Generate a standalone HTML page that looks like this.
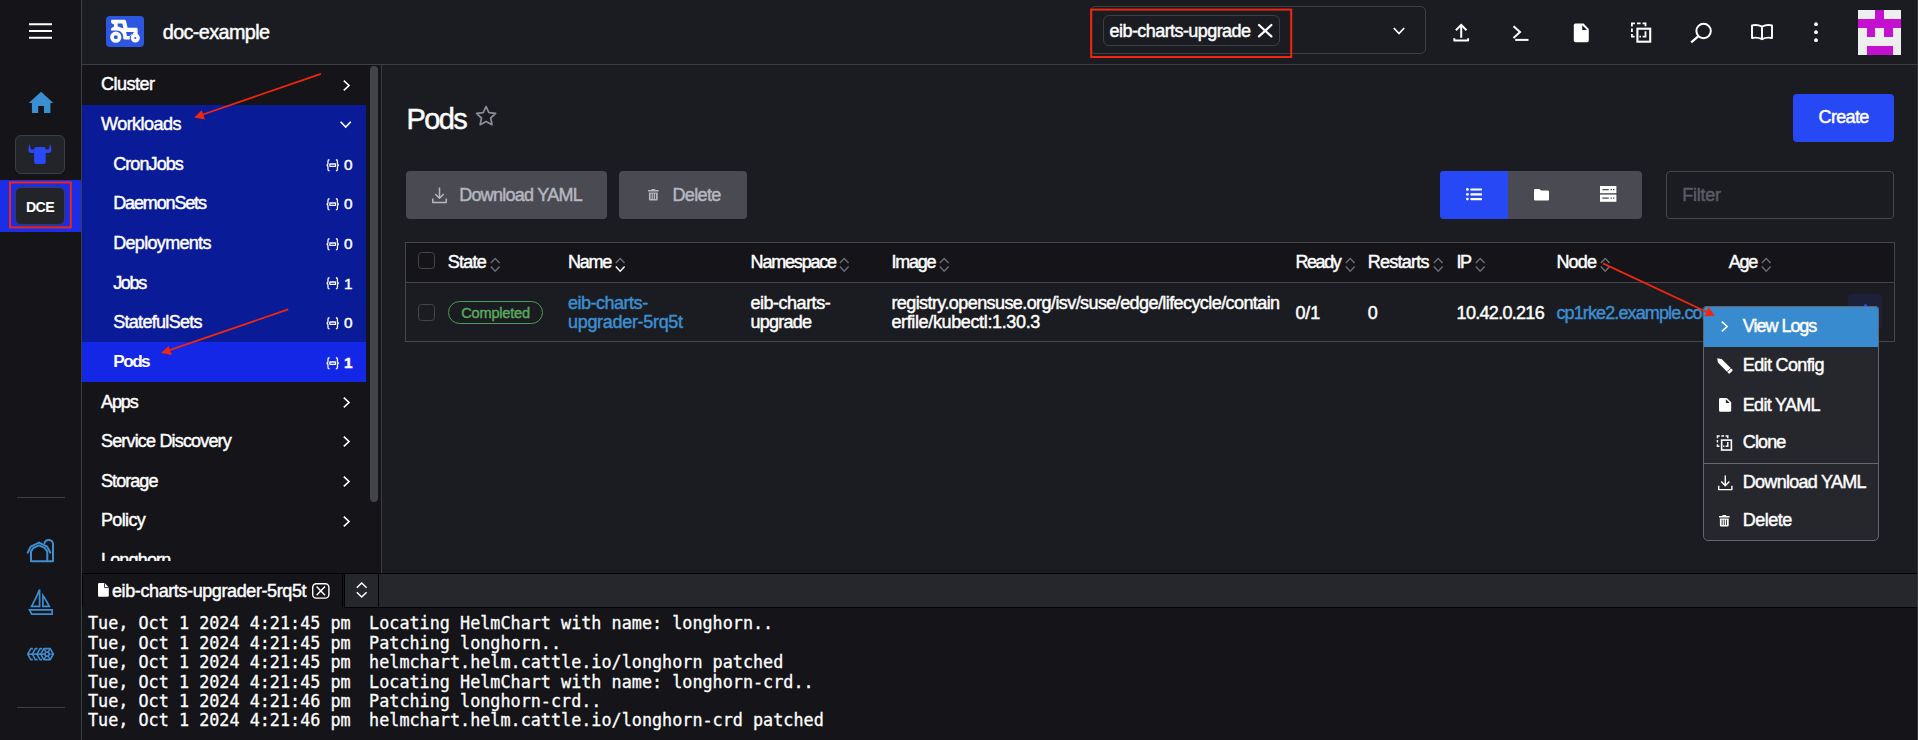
<!DOCTYPE html>
<html lang="en">
<head>
<meta charset="utf-8">
<title>Pods - doc-example</title>
<style>
*{box-sizing:border-box;margin:0;padding:0}
html,body{width:1918px;height:740px;overflow:hidden;background:#1b1c21}
body{position:relative;font-family:"Liberation Sans",sans-serif;font-size:18px;color:#fff;-webkit-font-smoothing:antialiased}
.abs{position:absolute}
.t{position:absolute;white-space:nowrap;line-height:20px;height:20px;-webkit-text-stroke:0.45px currentColor}
svg{position:absolute;overflow:visible}
/* rail */
#rail{left:0;top:0;width:81px;height:740px;background:#141419}
#railb{left:81px;top:0;width:1px;height:740px;background:#3d3e44}
/* header */
#hdr{left:82px;top:0;width:1836px;height:64px;background:#1b1c21}
#hdrb{left:82px;top:64px;width:1836px;height:1px;background:#3d3e44}
/* nav */
#nav{left:82px;top:65px;width:299px;height:508px;background:#141419;overflow:hidden}
#navb{left:381px;top:65px;width:1px;height:508px;background:#3d3e44}
.row{position:absolute;left:0;width:284px;height:39.7px}
.row .t{top:10px}
.cnt{position:absolute;left:262px;top:11.9px;font-size:15.4px;line-height:18px;white-space:nowrap;-webkit-text-stroke:0.45px currentColor}
/* main */
#main{left:382px;top:65px;width:1536px;height:508px;background:#1b1c21}
.btn{position:absolute;border-radius:4px}
.dis{color:#b6b7c0}
.th{top:251.8px}
.lnk{color:#3d8fd1}
.mi{left:1742.8px}
#log span{margin-left:-1.8px}
/* bottom */
#bot{left:82px;top:573px;width:1836px;height:167px;background:#141419}
#log{position:absolute;left:6px;top:41.4px;font-family:"DejaVu Sans Mono","Liberation Mono",monospace;font-size:16.79px;line-height:19.4px;white-space:pre;color:#fff;-webkit-text-stroke:0.3px #fff}
/*LS*/
#tcluster{letter-spacing:-0.61px}
#tns{letter-spacing:-0.57px}
#ttitle{letter-spacing:-1.68px}
#tcreate{letter-spacing:-0.67px}
#tdl{letter-spacing:-0.74px}
#tdel{letter-spacing:-0.64px}
#tfilter{letter-spacing:-0.27px}
#h1{letter-spacing:-0.75px}
#h2{letter-spacing:-1.26px}
#h3{letter-spacing:-1.19px}
#h4{letter-spacing:-1.25px}
#h5{letter-spacing:-1.41px}
#h6{letter-spacing:-0.73px}
#h7{letter-spacing:-1.51px}
#h8{letter-spacing:-0.81px}
#h9{letter-spacing:-1.34px}
#tcomp{letter-spacing:-0.23px}
#c1a{letter-spacing:-0.49px}
#c1b{letter-spacing:-0.31px}
#c2a{letter-spacing:-0.50px}
#c2b{letter-spacing:-0.79px}
#c3a{letter-spacing:-0.58px}
#c3b{letter-spacing:-0.36px}
#c4{letter-spacing:-0.08px}
#c6{letter-spacing:-0.70px}
#mt1{letter-spacing:-1.02px}
#mt2{letter-spacing:-0.64px}
#mt3{letter-spacing:-0.71px}
#mt4{letter-spacing:-0.87px}
#mt5{letter-spacing:-0.72px}
#mt6{letter-spacing:-0.52px}
#ttab{letter-spacing:-0.40px}
#n0{letter-spacing:-0.50px}
#n1{letter-spacing:-0.52px}
#n2{letter-spacing:-0.91px}
#n3{letter-spacing:-1.14px}
#n4{letter-spacing:-0.68px}
#n5{letter-spacing:-1.33px}
#n6{letter-spacing:-0.70px}
#n7{letter-spacing:-1.51px}
#n8{letter-spacing:-1.08px}
#n9{letter-spacing:-0.83px}
#n10{letter-spacing:-0.94px}
#n11{letter-spacing:-0.64px}
#n12{letter-spacing:-0.83px}
#dce{letter-spacing:-0.65px}
#c7{letter-spacing:-0.88px}
/*ENDLS*/
</style>
</head>
<body>
<div id="rail" class="abs">
<svg style="left:28.6px;top:22.8px" width="23" height="16" viewBox="0 0 23 16"><path d="M0 1.2H23M0 7.95H23M0 14.7H23" stroke="#fff" stroke-width="2.1" fill="none"/></svg>
<svg id="ihome" style="left:28px;top:91px" width="26" height="23" viewBox="28 91 26 23"><path d="M41.1 91.8 L53.4 103 H50.4 V113 H44 V105.9 H38.2 V113 H31.9 V103 H28.7 Z" fill="#3a8fd0"/></svg>
<div class="abs" style="left:15px;top:135px;width:50px;height:39px;background:#232429;border:1px solid #3d3e44;border-radius:6px"></div>
<svg id="ibull" style="left:27px;top:143px" width="26" height="22" viewBox="27 143 26 22"><path d="M36.1 146.9 H43.7 Q45.7 146.9 45.7 148.9 V162 Q45.7 164 43.7 164 H36.1 Q34.1 164 34.1 162 V148.9 Q34.1 146.9 36.1 146.9 Z M34.3 149.6 H32.2 Q30.7 149.6 30.5 148 L29.8 143.7 L28.4 148.4 Q27.8 153 31.6 153 H34.3 Z M45.5 149.6 H47.6 Q49.1 149.6 49.3 148 L50 143.7 L51.4 148.4 Q52 153 48.2 153 H45.5 Z" fill="#2b48f7"/></svg>
<div class="abs" style="left:0;top:180px;width:81px;height:52px;background:#1a2ee8"></div>
<div class="abs" style="left:15px;top:187.3px;width:50px;height:38px;background:#232429;border:1px solid #3d3e44;border-radius:6px"></div>
<div class="t" id="dce" style="left:15px;width:50px;top:196.5px;text-align:center;font-weight:bold;font-size:14.2px;-webkit-text-stroke:0">DCE</div>
<div class="abs" style="left:17px;top:497px;width:48px;height:1px;background:#3d3e44"></div>
<div class="abs" style="left:17px;top:707px;width:48px;height:1px;background:#3d3e44"></div>
<svg id="ibarn" style="left:26px;top:538px" width="30" height="26" viewBox="26 538 30 26" fill="none" stroke="#3d8fd1" stroke-width="2" stroke-linejoin="round" stroke-linecap="round"><path d="M27.7 552.6 L30.7 546.6 L39 542.6 L47.2 546.6 L50.3 552.6"/><path d="M31 561 V551.4 L33.4 547.9 L39 545.4 L44.6 547.9 L47.3 551.4 V561"/><path d="M31 561.2 H53 V543.9 A4.35 4.35 0 0 0 44.5 543"/></svg>
<svg id="iboat" style="left:27px;top:587px" width="28" height="30" viewBox="27 587 28 30" fill="none" stroke="#3d8fd1" stroke-width="1.7" stroke-linejoin="miter"><path d="M39.6 589.6 L39.6 606.3 L31.6 606.3 Q36.4 597.5 39.6 589.6 Z"/><path d="M42.9 595.6 Q46.6 601 49.3 606.3 L42.9 606.3 Z"/><path d="M29.5 609.8 H52.1 V614.1 H31.7 Z"/></svg>
<svg id="ifleet" style="left:26px;top:646px" width="30" height="16" viewBox="26 646 30 16" fill="none" stroke="#3d8fd1" stroke-width="1.6" stroke-linejoin="round"><path d="M32.9 648.6 H30.8 L27.7 654.1 L30.8 659.6 H32.9"/><path d="M37.5 648.6 H35.4 L32.3 654.1 L35.4 659.6 H37.5"/><path d="M42.1 648.6 H40.0 L36.9 654.1 L40.0 659.6 H42.1"/><path d="M27.7 654.1 H44.8"/><path d="M43.9 648.6 H50.2 L53.4 654.1 L50.2 659.6 H43.9 L40.7 654.1 Z"/><circle cx="47.05" cy="654.1" r="2.1"/><path d="M43.9 648.6 L46 652.2 M50.2 648.6 L48.1 652.2 M53.4 654.1 H49.2 M50.2 659.6 L48.1 656 M43.9 659.6 L46 656" stroke-width="1.4"/></svg>
</div>
<div id="railb" class="abs"></div>
<div id="hdr" class="abs"></div>
<div class="abs" style="left:106px;top:16px;width:38px;height:31px;background:#2d57e1;border-radius:4px"></div>
<svg id="itractor" style="left:106px;top:16px" width="38" height="31" viewBox="106 16 38 31"><path d="M112 19.8 H124.6 Q125.6 19.8 125.9 20.8 L127.6 27.8 H136.4 Q137.6 27.8 137.6 29 V34 L133 34 Q129.6 34 129.6 39.4 H124.6 Q123.2 39.4 123.2 38 V36 Q122 30.6 116 30.6 H112.2 Q111 30.6 111 29.4 Q111 28.2 112.2 27.6 L114 26.8 V24.6 L112 23.6 Q111 23.2 111 21.6 V20.8 Q111 19.8 112 19.8 Z M117.6 23.6 V26.2 L123.4 28.4 L122.4 23.6 Z M126 32 L127 36 H131 L134 32 Z" fill="#fff" fill-rule="evenodd"/><circle cx="115.8" cy="37.2" r="3.8" fill="none" stroke="#fff" stroke-width="3.6"/><circle cx="135.3" cy="38" r="2.8" fill="none" stroke="#fff" stroke-width="3.4"/></svg>
<div class="t" id="tcluster" style="left:162.8px;top:21.9px;font-size:19.8px">doc-example</div>
<div class="abs" style="left:1090px;top:6px;width:336px;height:48px;border:1px solid #3e3f45;border-radius:5px"></div>
<div class="abs" style="left:1103px;top:15px;width:177px;height:31px;border:1px solid #3e3f45;border-radius:6px"></div>
<div class="t" id="tns" style="left:1109.6px;top:20.6px">eib-charts-upgrade</div>
<svg style="left:1258px;top:24.3px" width="14.4" height="13.4" viewBox="0 0 14.4 13.4"><path d="M1 1 L13.4 12.4 M13.4 1 L1 12.4" stroke="#fff" stroke-width="2.2" fill="none" stroke-linecap="round"/></svg>
<svg style="left:1392.5px;top:27.2px" width="12" height="8" viewBox="0 0 12 8"><path d="M0.8 1 L6 6.6 L11.2 1" stroke="#fff" stroke-width="1.7" fill="none"/></svg>
<!-- header icons -->
<svg id="hi1" style="left:1452px;top:23px" width="18" height="20" viewBox="1452 23 18 20" fill="none" stroke="#fff" stroke-width="2"><path d="M1461.2 37.8 V25 M1455.9 30.2 L1461.2 24.9 L1466.5 30.2"/><path d="M1454.3 38.2 V40.5 H1468.1 V38.2" stroke-linejoin="round"/></svg>
<svg id="hi2" style="left:1512px;top:25px" width="18" height="17" viewBox="1512 25 18 17" fill="none" stroke="#fff" stroke-width="2"><path d="M1513.5 26.3 L1520 32 L1513.5 37.9"/><path d="M1515.2 39.9 H1528.5"/></svg>
<svg id="hi3" style="left:1573px;top:23px" width="17" height="20" viewBox="1573 23 17 20"><path d="M1575.4 23.6 H1583.6 L1588.8 28.9 V40.4 Q1588.8 42.2 1587 42.2 H1575.6 Q1573.8 42.2 1573.8 40.4 V25.2 Q1573.8 23.6 1575.4 23.6 Z" fill="#fff"/><path d="M1582.2 25.2 V29.9 H1587 Z" fill="#1b1c21"/></svg>
<svg id="hi4" style="left:1630px;top:22px" width="23" height="21" viewBox="1630 22 23 21" fill="none" stroke="#fff" stroke-width="1.8"><path d="M1631.9 26.4 V23.4 H1634.9 M1637 23.4 H1640.6 M1642.6 23.4 H1645.5 V26.2 M1631.9 28.4 V32 M1631.9 34 V36.7 H1634.6 M1645.5 31.2 V36.7 H1642.6 M1641 36.7 H1639.4"/><rect x="1637.4" y="28.7" width="12.8" height="13" stroke-width="2.1"/></svg>
<svg id="hi5" style="left:1690px;top:22px" width="23" height="21" viewBox="1690 22 23 21" fill="none" stroke="#fff" stroke-width="2"><circle cx="1703.6" cy="31" r="7.2"/><path d="M1698.2 36.4 L1691.2 42.4" stroke-width="2.2"/></svg>
<svg id="hi6" style="left:1749px;top:23px" width="26" height="18" viewBox="1749 23 26 18" fill="none" stroke="#fff" stroke-width="1.9" stroke-linejoin="round"><path d="M1762 26.6 Q1757.4 24.2 1752 25.4 V38 Q1757.4 36.8 1762 39.2 Q1766.6 36.8 1772 38 V25.4 Q1766.6 24.2 1762 26.6 Z M1762 26.6 V39.2"/></svg>
<svg id="hi7" style="left:1813px;top:22px" width="6" height="20" viewBox="1813 22 6 20" fill="#fff"><circle cx="1816" cy="24.2" r="1.9"/><circle cx="1816" cy="32.2" r="1.9"/><circle cx="1816" cy="40.2" r="1.9"/></svg>
<svg id="avatar" style="left:1858px;top:9.6px" width="43.2" height="44.6" viewBox="0 0 50 50" preserveAspectRatio="none" shape-rendering="crispEdges"><rect width="50" height="50" fill="#eeeeee"/><path d="M20 0H30V10H50V20H40V30H30V20H20V30H10V20H0V10H20Z M10 40H40V50H10Z" fill="#c411d0"/></svg>
<div id="hdrb" class="abs"></div>
<div id="nav" class="abs">
<div class="abs" style="left:0;top:39.9px;width:284px;height:237.2px;background:#0a1b97"></div>
<div class="abs" style="left:0;top:276.9px;width:284px;height:40.2px;background:#1426e6"></div>
<div class="row " style="top:-0.54px"><div class="t" id="n0" style="left:19px">Cluster</div><svg style="left:260.5px;top:15.2px" width="7" height="11" viewBox="0 0 7 11"><path d="M0.8 0.6 L6 5.5 L0.8 10.4" stroke="#fff" stroke-width="1.6" fill="none"/></svg></div>
<div class="row grp" style="top:39.09px"><div class="t" id="n1" style="left:19px">Workloads</div><svg style="left:258.2px;top:17.4px" width="11.4" height="7" viewBox="0 0 11.4 7"><path d="M0.6 0.8 L5.7 6 L10.8 0.8" stroke="#fff" stroke-width="1.6" fill="none"/></svg></div>
<div class="row grp" style="top:78.72px"><div class="t" id="n2" style="left:31.2px">CronJobs</div><svg style="left:243.9px;top:14.8px" width="13.4" height="12.4" viewBox="0 0 13 11" preserveAspectRatio="none" fill="none" stroke="#fff" stroke-width="1.25"><path d="M3.4 0.6 Q1.9 0.6 1.9 2 V4 Q1.9 5.5 0.5 5.5 Q1.9 5.5 1.9 7 V9 Q1.9 10.4 3.4 10.4 M9.6 0.6 Q11.1 0.6 11.1 2 V4 Q11.1 5.5 12.5 5.5 Q11.1 5.5 11.1 7 V9 Q11.1 10.4 9.6 10.4"/><rect x="3.7" y="4.4" width="5.6" height="2.2" rx="0.3" stroke-width="1.2"/></svg><div class="cnt">0</div></div>
<div class="row grp" style="top:118.35px"><div class="t" id="n3" style="left:31.2px">DaemonSets</div><svg style="left:243.9px;top:14.8px" width="13.4" height="12.4" viewBox="0 0 13 11" preserveAspectRatio="none" fill="none" stroke="#fff" stroke-width="1.25"><path d="M3.4 0.6 Q1.9 0.6 1.9 2 V4 Q1.9 5.5 0.5 5.5 Q1.9 5.5 1.9 7 V9 Q1.9 10.4 3.4 10.4 M9.6 0.6 Q11.1 0.6 11.1 2 V4 Q11.1 5.5 12.5 5.5 Q11.1 5.5 11.1 7 V9 Q11.1 10.4 9.6 10.4"/><rect x="3.7" y="4.4" width="5.6" height="2.2" rx="0.3" stroke-width="1.2"/></svg><div class="cnt">0</div></div>
<div class="row grp" style="top:157.98px"><div class="t" id="n4" style="left:31.2px">Deployments</div><svg style="left:243.9px;top:14.8px" width="13.4" height="12.4" viewBox="0 0 13 11" preserveAspectRatio="none" fill="none" stroke="#fff" stroke-width="1.25"><path d="M3.4 0.6 Q1.9 0.6 1.9 2 V4 Q1.9 5.5 0.5 5.5 Q1.9 5.5 1.9 7 V9 Q1.9 10.4 3.4 10.4 M9.6 0.6 Q11.1 0.6 11.1 2 V4 Q11.1 5.5 12.5 5.5 Q11.1 5.5 11.1 7 V9 Q11.1 10.4 9.6 10.4"/><rect x="3.7" y="4.4" width="5.6" height="2.2" rx="0.3" stroke-width="1.2"/></svg><div class="cnt">0</div></div>
<div class="row grp" style="top:197.61px"><div class="t" id="n5" style="left:31.2px">Jobs</div><svg style="left:243.9px;top:14.8px" width="13.4" height="12.4" viewBox="0 0 13 11" preserveAspectRatio="none" fill="none" stroke="#fff" stroke-width="1.25"><path d="M3.4 0.6 Q1.9 0.6 1.9 2 V4 Q1.9 5.5 0.5 5.5 Q1.9 5.5 1.9 7 V9 Q1.9 10.4 3.4 10.4 M9.6 0.6 Q11.1 0.6 11.1 2 V4 Q11.1 5.5 12.5 5.5 Q11.1 5.5 11.1 7 V9 Q11.1 10.4 9.6 10.4"/><rect x="3.7" y="4.4" width="5.6" height="2.2" rx="0.3" stroke-width="1.2"/></svg><div class="cnt">1</div></div>
<div class="row grp" style="top:237.24px"><div class="t" id="n6" style="left:31.2px">StatefulSets</div><svg style="left:243.9px;top:14.8px" width="13.4" height="12.4" viewBox="0 0 13 11" preserveAspectRatio="none" fill="none" stroke="#fff" stroke-width="1.25"><path d="M3.4 0.6 Q1.9 0.6 1.9 2 V4 Q1.9 5.5 0.5 5.5 Q1.9 5.5 1.9 7 V9 Q1.9 10.4 3.4 10.4 M9.6 0.6 Q11.1 0.6 11.1 2 V4 Q11.1 5.5 12.5 5.5 Q11.1 5.5 11.1 7 V9 Q11.1 10.4 9.6 10.4"/><rect x="3.7" y="4.4" width="5.6" height="2.2" rx="0.3" stroke-width="1.2"/></svg><div class="cnt">0</div></div>
<div class="row act" style="top:276.87px"><div class="t" id="n7" style="left:31.2px;top:9.2px;font-weight:bold;font-size:17.2px;-webkit-text-stroke:0">Pods</div><svg style="left:243.9px;top:14.8px" width="13.4" height="12.4" viewBox="0 0 13 11" preserveAspectRatio="none" fill="none" stroke="#fff" stroke-width="1.25"><path d="M3.4 0.6 Q1.9 0.6 1.9 2 V4 Q1.9 5.5 0.5 5.5 Q1.9 5.5 1.9 7 V9 Q1.9 10.4 3.4 10.4 M9.6 0.6 Q11.1 0.6 11.1 2 V4 Q11.1 5.5 12.5 5.5 Q11.1 5.5 11.1 7 V9 Q11.1 10.4 9.6 10.4"/><rect x="3.7" y="4.4" width="5.6" height="2.2" rx="0.3" stroke-width="1.2"/></svg><div class="cnt" style="font-weight:bold">1</div></div>
<div class="row " style="top:316.50px"><div class="t" id="n8" style="left:19px">Apps</div><svg style="left:260.5px;top:15.2px" width="7" height="11" viewBox="0 0 7 11"><path d="M0.8 0.6 L6 5.5 L0.8 10.4" stroke="#fff" stroke-width="1.6" fill="none"/></svg></div>
<div class="row " style="top:356.13px"><div class="t" id="n9" style="left:19px">Service Discovery</div><svg style="left:260.5px;top:15.2px" width="7" height="11" viewBox="0 0 7 11"><path d="M0.8 0.6 L6 5.5 L0.8 10.4" stroke="#fff" stroke-width="1.6" fill="none"/></svg></div>
<div class="row " style="top:395.76px"><div class="t" id="n10" style="left:19px">Storage</div><svg style="left:260.5px;top:15.2px" width="7" height="11" viewBox="0 0 7 11"><path d="M0.8 0.6 L6 5.5 L0.8 10.4" stroke="#fff" stroke-width="1.6" fill="none"/></svg></div>
<div class="row " style="top:435.39px"><div class="t" id="n11" style="left:19px">Policy</div><svg style="left:260.5px;top:15.2px" width="7" height="11" viewBox="0 0 7 11"><path d="M0.8 0.6 L6 5.5 L0.8 10.4" stroke="#fff" stroke-width="1.6" fill="none"/></svg></div>
<div class="row " style="top:475.02px"><div class="t" id="n12" style="left:19px">Longhorn</div></div>
<div class="abs" style="left:0;top:496px;width:299px;height:12px;background:#141419"></div>
<div class="abs" style="left:288.4px;top:1.4px;width:8px;height:436px;background:#434449;border-radius:4px"></div>
</div>
<div id="navb" class="abs"></div>
<div id="main" class="abs"></div>
<div class="t" id="ttitle" style="left:406.6px;top:99.6px;font-size:29px;line-height:38px;height:38px">Pods</div>
<svg id="istar" style="left:474.6px;top:105.4px" width="22.2" height="21.4" viewBox="0 0 24 23" fill="none" stroke="#8a8b94" stroke-width="1.9" stroke-linejoin="round"><path d="M12 1.6 L15.1 8.2 L22.3 9.1 L17 14 L18.4 21.2 L12 17.7 L5.6 21.2 L7 14 L1.7 9.1 L8.9 8.2 Z"/></svg>
<div class="btn" style="left:1793px;top:94.3px;width:101.2px;height:47.5px;background:#2649f5"></div>
<div class="t" id="tcreate" style="left:1818.6px;top:107.4px">Create</div>
<div class="btn" style="left:405.8px;top:171px;width:201.2px;height:47.8px;background:#4a4b52"></div>
<svg id="idl1" style="left:432.4px;top:187px" width="15" height="16.4" viewBox="0 0 15 16.4" fill="none" stroke="#b6b7c0" stroke-width="1.5"><path d="M7.5 0.6 V11 M3.2 7 L7.5 11.2 L11.8 7"/><path d="M0.8 11.6 V15.4 H14.2 V11.6" stroke-linejoin="round"/></svg>
<div class="t dis" id="tdl" style="left:459.2px;top:185px">Download YAML</div>
<div class="btn" style="left:619px;top:171px;width:128px;height:47.8px;background:#4a4b52"></div>
<svg id="itrash1" style="left:647.6px;top:189px" width="10.6" height="11.4" viewBox="0 0 10.6 11.4" fill="#b6b7c0"><path d="M3.6 0 H7 L7.4 1 H10.6 V2.4 H0 V1 H3.2 Z M0.9 3.4 H9.7 V10.2 Q9.7 11.4 8.5 11.4 H2.1 Q0.9 11.4 0.9 10.2 Z"/><path d="M3.1 4.6 V10 M5.3 4.6 V10 M7.5 4.6 V10" stroke="#4a4b52" stroke-width="0.9"/></svg>
<div class="t dis" id="tdel" style="left:672.5px;top:185px">Delete</div>
<div class="abs" style="left:1440px;top:171px;width:202px;height:48px;background:#4a4b52;border-radius:4px"></div>
<div class="abs" style="left:1440px;top:171px;width:68px;height:48px;background:#2649f5;border-radius:4px 0 0 4px"></div>
<svg id="ilist" style="left:1466px;top:188.4px" width="16" height="12.6" viewBox="0 0 16 12.6" fill="#fff"><circle cx="1.4" cy="1.5" r="1.4"/><circle cx="1.4" cy="6.3" r="1.4"/><circle cx="1.4" cy="11.1" r="1.4"/><rect x="4.4" y="0.4" width="11.6" height="2.2" rx="0.6"/><rect x="4.4" y="5.2" width="11.6" height="2.2" rx="0.6"/><rect x="4.4" y="10" width="11.6" height="2.2" rx="0.6"/></svg>
<svg id="ifolder" style="left:1533.6px;top:189px" width="15" height="11.4" viewBox="0 0 15 11.4" fill="#fff"><path d="M1.2 0 H5.4 L7 1.6 H13.8 Q15 1.6 15 2.8 V10.2 Q15 11.4 13.8 11.4 H1.2 Q0 11.4 0 10.2 V1.2 Q0 0 1.2 0 Z"/></svg>
<svg id="iserver" style="left:1600.4px;top:186.4px" width="16.4" height="15.8" viewBox="0 0 16.4 15.8"><rect x="0" y="0" width="16.4" height="7.2" fill="#fff"/><rect x="0" y="8.6" width="16.4" height="7.2" fill="#fff"/><path d="M2.4 3.6 H8.8 M10.6 3.6 H12 M13 3.6 H14.4 M2.4 12.2 H8.8 M10.6 12.2 H12 M13 12.2 H14.4" stroke="#4a4b52" stroke-width="1.3"/></svg>
<div class="abs" style="left:1666px;top:171px;width:228.2px;height:48px;border:1px solid #45464c;border-radius:4px"></div>
<div class="t" id="tfilter" style="left:1682.3px;top:185px;color:#5b5c66">Filter</div>
<!-- table -->
<div class="abs" style="left:405px;top:242px;width:1490px;height:100px;border:1px solid #45464c"></div>
<div class="abs" style="left:406px;top:243px;width:1488px;height:39px;background:#141419"></div>
<div class="abs" style="left:406px;top:282px;width:1488px;height:1px;background:#45464c"></div>
<div class="abs" style="left:417.6px;top:252px;width:17.4px;height:17px;border:1px solid #45464c;border-radius:3.5px;background:#141419"></div>
<div class="abs" style="left:418.4px;top:304px;width:17px;height:17px;border:1px solid #45464c;border-radius:3.5px;background:#1b1c21"></div>
<div class="t th" id="h1" style="left:447.7px">State</div><svg style="left:490.0px;top:256.6px" width="10.4" height="15.6" viewBox="0 0 10.4 15.6" fill="none" stroke-width="1.4"><path d="M0.8 6 L5.2 1.4 L9.6 6" stroke="#6c6d76"/><path d="M0.8 9.6 L5.2 14.2 L9.6 9.6" stroke="#6c6d76"/></svg>
<div class="t th" id="h2" style="left:568px">Name</div><svg style="left:615.0px;top:256.6px" width="10.4" height="15.6" viewBox="0 0 10.4 15.6" fill="none" stroke-width="1.4"><path d="M0.8 6 L5.2 1.4 L9.6 6" stroke="#6c6d76"/><path d="M0.8 9.6 L5.2 14.2 L9.6 9.6" stroke="#fff"/></svg>
<div class="t th" id="h3" style="left:750.6px">Namespace</div><svg style="left:839.0px;top:256.6px" width="10.4" height="15.6" viewBox="0 0 10.4 15.6" fill="none" stroke-width="1.4"><path d="M0.8 6 L5.2 1.4 L9.6 6" stroke="#6c6d76"/><path d="M0.8 9.6 L5.2 14.2 L9.6 9.6" stroke="#6c6d76"/></svg>
<div class="t th" id="h4" style="left:891.4px">Image</div><svg style="left:938.6px;top:256.6px" width="10.4" height="15.6" viewBox="0 0 10.4 15.6" fill="none" stroke-width="1.4"><path d="M0.8 6 L5.2 1.4 L9.6 6" stroke="#6c6d76"/><path d="M0.8 9.6 L5.2 14.2 L9.6 9.6" stroke="#6c6d76"/></svg>
<div class="t th" id="h5" style="left:1295.4px">Ready</div><svg style="left:1344.5px;top:256.6px" width="10.4" height="15.6" viewBox="0 0 10.4 15.6" fill="none" stroke-width="1.4"><path d="M0.8 6 L5.2 1.4 L9.6 6" stroke="#6c6d76"/><path d="M0.8 9.6 L5.2 14.2 L9.6 9.6" stroke="#6c6d76"/></svg>
<div class="t th" id="h6" style="left:1367.7px">Restarts</div><svg style="left:1432.8px;top:256.6px" width="10.4" height="15.6" viewBox="0 0 10.4 15.6" fill="none" stroke-width="1.4"><path d="M0.8 6 L5.2 1.4 L9.6 6" stroke="#6c6d76"/><path d="M0.8 9.6 L5.2 14.2 L9.6 9.6" stroke="#6c6d76"/></svg>
<div class="t th" id="h7" style="left:1456.6px">IP</div><svg style="left:1474.7px;top:256.6px" width="10.4" height="15.6" viewBox="0 0 10.4 15.6" fill="none" stroke-width="1.4"><path d="M0.8 6 L5.2 1.4 L9.6 6" stroke="#6c6d76"/><path d="M0.8 9.6 L5.2 14.2 L9.6 9.6" stroke="#6c6d76"/></svg>
<div class="t th" id="h8" style="left:1556.4px">Node</div><svg style="left:1599.8px;top:256.6px" width="10.4" height="15.6" viewBox="0 0 10.4 15.6" fill="none" stroke-width="1.4"><path d="M0.8 6 L5.2 1.4 L9.6 6" stroke="#6c6d76"/><path d="M0.8 9.6 L5.2 14.2 L9.6 9.6" stroke="#6c6d76"/></svg>
<div class="t th" id="h9" style="left:1728.8px">Age</div><svg style="left:1761.0px;top:256.6px" width="10.4" height="15.6" viewBox="0 0 10.4 15.6" fill="none" stroke-width="1.4"><path d="M0.8 6 L5.2 1.4 L9.6 6" stroke="#6c6d76"/><path d="M0.8 9.6 L5.2 14.2 L9.6 9.6" stroke="#6c6d76"/></svg>
<div class="abs" style="left:447.7px;top:301px;width:95.6px;height:23px;border:1px solid #4f9b56;border-radius:12px"></div>
<div class="t" id="tcomp" style="left:461.3px;top:302.5px;font-size:14.6px;color:#5aa85f">Completed</div>
<div class="t td lnk" id="c1a" style="left:568px;top:292.5px">eib-charts-</div>
<div class="t td lnk" id="c1b" style="left:568px;top:311.5px">upgrader-5rq5t</div>
<div class="t td" id="c2a" style="left:750.6px;top:292.5px">eib-charts-</div>
<div class="t td" id="c2b" style="left:750.6px;top:311.5px">upgrade</div>
<div class="t td" id="c3a" style="left:891.4px;top:292.5px">registry.opensuse.org/isv/suse/edge/lifecycle/contain</div>
<div class="t td" id="c3b" style="left:891.4px;top:311.5px">erfile/kubectl:1.30.3</div>
<div class="t td" id="c4" style="left:1295.4px;top:302.6px">0/1</div>
<div class="t td" id="c5" style="left:1367.7px;top:302.6px">0</div>
<div class="t td" id="c6" style="left:1456.6px;top:302.6px">10.42.0.216</div>
<div class="t td lnk" id="c7" style="left:1556.4px;top:302.6px">cp1rke2.example.com</div>
<div class="abs" style="left:1848px;top:294px;width:34px;height:35.6px;background:#1c2038;border-radius:4px"></div><div class="abs" style="left:1863.6px;top:303.8px;width:3px;height:3px;border-radius:2px;background:#2a4af8"></div>
<!-- context menu -->
<div class="abs" style="left:1703.4px;top:306.4px;width:175.4px;height:234.4px;background:#26272d;border:1px solid #66676e;border-radius:3px 3px 5px 5px;overflow:hidden"><div class="abs" style="left:-1px;top:-1px;width:176px;height:40.6px;background:#388bcf"></div><div class="abs" style="left:0;top:155.4px;width:175px;height:1px;background:#66676e"></div></div>
<svg id="m1" style="left:1720.8px;top:321.2px" width="7.4" height="11" viewBox="0 0 7.4 11"><path d="M0.8 0.6 L6.2 5.5 L0.8 10.4" stroke="#fff" stroke-width="1.5" fill="none"/></svg>
<div class="t mi" id="mt1" style="top:316.3px">View Logs</div>
<svg id="m2" style="left:1717px;top:358.2px" width="16" height="16" viewBox="0 0 16 16"><g transform="translate(0.2,0.2) rotate(45)"><path d="M0 0 L3.6 -2.6 H19 Q19.6 -2.6 19.6 -2 V2 Q19.6 2.6 19 2.6 H3.6 Z" fill="#fff"/><path d="M16.6 -2.6 V2.6" stroke="#26272d" stroke-width="0.8"/></g></svg>
<div class="t mi" id="mt2" style="top:355.4px">Edit Config</div>
<svg id="m3" style="left:1718.6px;top:398.2px" width="12.2" height="13.8" viewBox="0 0 12.2 13.8"><path d="M1.4 0 H7.8 L12.2 4.2 V12.4 Q12.2 13.8 10.8 13.8 H1.4 Q0 13.8 0 12.4 V1.4 Q0 0 1.4 0 Z" fill="#fff"/><path d="M6.9 1.3 V5 H10.7 Z" fill="#26272d"/></svg>
<div class="t mi" id="mt3" style="top:394.5px">Edit YAML</div>
<svg id="m4" style="left:1716.2px;top:434.6px" width="17.5" height="16" viewBox="1630 22 23 21" fill="none" stroke="#fff" stroke-width="1.9"><path d="M1631.9 26.4 V23.4 H1634.9 M1637 23.4 H1640.6 M1642.6 23.4 H1645.5 V26.2 M1631.9 28.4 V32 M1631.9 34 V36.7 H1634.6 M1645.5 31.2 V36.7 H1642.6 M1641 36.7 H1639.4"/><rect x="1637.4" y="28.7" width="12.8" height="13" stroke-width="2.1"/></svg>
<div class="t mi" id="mt4" style="top:432.4px">Clone</div>
<svg id="m5" style="left:1717.6px;top:475.2px" width="14.6" height="15.4" viewBox="0 0 14.6 15.4" fill="none" stroke="#fff" stroke-width="1.4"><path d="M7.3 0.4 V10.6 M3.2 6.6 L7.3 10.8 L11.4 6.6"/><path d="M0.7 10.8 V14.6 H13.9 V10.8" stroke-linejoin="round"/></svg>
<div class="t mi" id="mt5" style="top:472.1px">Download YAML</div>
<svg id="m6" style="left:1719.4px;top:514.8px" width="10.6" height="11.6" viewBox="0 0 10.6 11.4" fill="#fff"><path d="M3.6 0 H7 L7.4 1 H10.6 V2.4 H0 V1 H3.2 Z M0.9 3.4 H9.7 V10.2 Q9.7 11.4 8.5 11.4 H2.1 Q0.9 11.4 0.9 10.2 Z"/><path d="M3.1 4.6 V10 M5.3 4.6 V10 M7.5 4.6 V10" stroke="#26272d" stroke-width="0.9"/></svg>
<div class="t mi" id="mt6" style="top:510.2px">Delete</div>
<div id="bot" class="abs">
<div class="abs" style="left:263px;top:1px;width:1573px;height:33.2px;background:#26272c"></div>
<div class="abs" style="left:0;top:0;width:1836px;height:1.2px;background:#030304"></div>
<div class="abs" style="left:262px;top:34px;width:1574px;height:1.1px;background:#030304"></div>
<div class="abs" style="left:0;top:0;width:1px;height:34px;background:#030304"></div>
<div class="abs" style="left:260px;top:1px;width:1px;height:33px;background:#030304"></div>
<div class="abs" style="left:262px;top:1px;width:1px;height:34px;background:#030304"></div>
<div class="abs" style="left:296px;top:1px;width:1px;height:33px;background:#030304"></div>
<svg id="bfile" style="left:16.2px;top:10.2px" width="10.8" height="13.8" viewBox="0 0 12.2 13.8" preserveAspectRatio="none"><path d="M1.4 0 H7.6 L12.2 4.4 V12.4 Q12.2 13.8 10.8 13.8 H1.4 Q0 13.8 0 12.4 V1.4 Q0 0 1.4 0 Z" fill="#fff"/><path d="M7.4 0.2 V4.6 H12" fill="none" stroke="#141419" stroke-width="0.9"/></svg>
<div class="t" id="ttab" style="left:30px;top:8px">eib-charts-upgrader-5rq5t</div>
<svg id="bclose" style="left:229.9px;top:10.2px" width="17.6" height="15.8" viewBox="0 0 17.6 15.8" fill="none" stroke="#fff" stroke-width="1.4"><rect x="0.7" y="0.7" width="16.2" height="14.4" rx="3.6"/><path d="M4.6 3.6 L13 12.2 M13 3.6 L4.6 12.2" stroke-width="1.5"/></svg>
<svg id="bupdown" style="left:273.8px;top:8.8px" width="11.4" height="16" viewBox="0 0 11.4 16" fill="none" stroke="#fff" stroke-width="1.5"><path d="M0.8 5.8 L5.7 1 L10.6 5.8"/><path d="M0.8 10.2 L5.7 15 L10.6 10.2"/></svg>
<div id="log">Tue, Oct 1 2024 4:21:45 pm  <span>Locating HelmChart with name: longhorn..</span>
Tue, Oct 1 2024 4:21:45 pm  <span>Patching longhorn..</span>
Tue, Oct 1 2024 4:21:45 pm  <span>helmchart.helm.cattle.io/longhorn patched</span>
Tue, Oct 1 2024 4:21:45 pm  <span>Locating HelmChart with name: longhorn-crd..</span>
Tue, Oct 1 2024 4:21:46 pm  <span>Patching longhorn-crd..</span>
Tue, Oct 1 2024 4:21:46 pm  <span>helmchart.helm.cattle.io/longhorn-crd patched</span></div>
</div>
<div class="abs" style="left:1917px;top:0;width:1px;height:740px;background:#38393e"></div>
<!-- annotations -->
<svg id="anno" style="left:0;top:0" width="1918" height="740" viewBox="0 0 1918 740" fill="none" stroke="#f0260f">
<rect x="10" y="182.4" width="60.8" height="45" stroke-width="2"/>
<rect x="1091.2" y="9.6" width="200" height="47.4" stroke-width="2"/>
<path d="M320.9 73.8 L200 115.5" stroke-width="1.8"/><path d="M194.3 117.5 L201.6 110.3 L205.1 119.5 Z" fill="#f0260f" stroke="none"/>
<path d="M288.2 309.4 L166.8 351.1" stroke-width="1.8"/><path d="M161.2 353.1 L168.5 345.9 L172 355.1 Z" fill="#f0260f" stroke="none"/>
<path d="M1603 263.4 L1709 313" stroke-width="1.8"/><path d="M1714.7 315.7 L1704.6 316.2 L1708.8 307.2 Z" fill="#f0260f" stroke="none"/>
</svg>
</body>
</html>
